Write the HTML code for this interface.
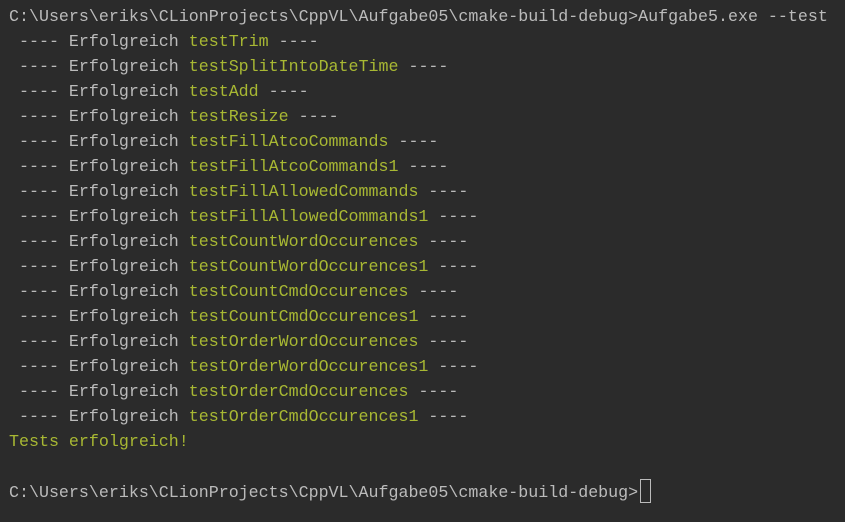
<!DOCTYPE html>
<html><head><style>
html,body{margin:0;padding:0;background:#2b2b2b;width:845px;height:522px;overflow:hidden}
pre{margin:0;position:absolute;left:9px;top:4px;font-family:"Liberation Mono",monospace;font-size:16.65px;line-height:25px;color:#bbbbbb}
.g{color:#a8b833}
.c{display:inline-block;width:11px;height:24px;border:1px solid #bbbbbb;vertical-align:-6px;box-sizing:border-box;margin-left:2px}
</style></head><body><pre>C:\Users\eriks\CLionProjects\CppVL\Aufgabe05\cmake-build-debug>Aufgabe5.exe --test
 ---- Erfolgreich <span class="g">testTrim</span> ----
 ---- Erfolgreich <span class="g">testSplitIntoDateTime</span> ----
 ---- Erfolgreich <span class="g">testAdd</span> ----
 ---- Erfolgreich <span class="g">testResize</span> ----
 ---- Erfolgreich <span class="g">testFillAtcoCommands</span> ----
 ---- Erfolgreich <span class="g">testFillAtcoCommands1</span> ----
 ---- Erfolgreich <span class="g">testFillAllowedCommands</span> ----
 ---- Erfolgreich <span class="g">testFillAllowedCommands1</span> ----
 ---- Erfolgreich <span class="g">testCountWordOccurences</span> ----
 ---- Erfolgreich <span class="g">testCountWordOccurences1</span> ----
 ---- Erfolgreich <span class="g">testCountCmdOccurences</span> ----
 ---- Erfolgreich <span class="g">testCountCmdOccurences1</span> ----
 ---- Erfolgreich <span class="g">testOrderWordOccurences</span> ----
 ---- Erfolgreich <span class="g">testOrderWordOccurences1</span> ----
 ---- Erfolgreich <span class="g">testOrderCmdOccurences</span> ----
 ---- Erfolgreich <span class="g">testOrderCmdOccurences1</span> ----
<span class="g">Tests erfolgreich!</span>

C:\Users\eriks\CLionProjects\CppVL\Aufgabe05\cmake-build-debug><span class="c"></span></pre></body></html>
